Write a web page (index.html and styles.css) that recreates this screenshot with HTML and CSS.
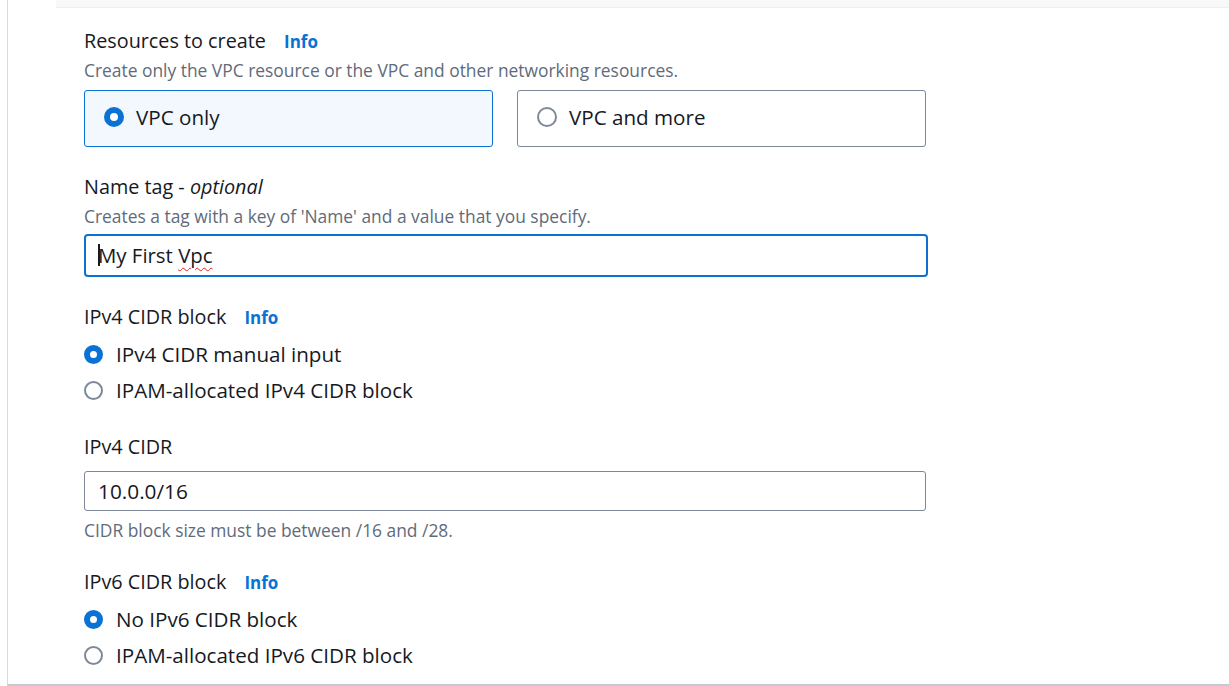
FILE: index.html
```html
<!DOCTYPE html>
<html lang="en">
<head>
<meta charset="utf-8">
<title>Create VPC</title>
<link rel="stylesheet" href="styles.css">
</head>
<body>
<div class="frame">
  <div class="topband"></div>
  <div class="form">
    <section class="field">
      <div class="label">Resources to create <a class="info">Info</a></div>
      <div class="desc">Create only the VPC resource or the VPC and other networking resources.</div>
      <div class="tiles">
        <div class="tile selected"><span class="radio on"></span><span>VPC only</span></div>
        <div class="tile"><span class="radio"></span><span>VPC and more</span></div>
      </div>
    </section>

    <section class="field gap-l">
      <div class="label">Name tag - <i>optional</i></div>
      <div class="desc">Creates a tag with a key of 'Name' and a value that you specify.</div>
      <div class="input focused"><span class="caret"></span>My First <span class="spell">Vpc</span></div>
    </section>

    <section class="field gap-l">
      <div class="label">IPv4 CIDR block <a class="info">Info</a></div>
      <div class="radios">
        <div class="opt"><span class="radio on"></span><span>IPv4 CIDR manual input</span></div>
        <div class="opt"><span class="radio"></span><span>IPAM-allocated IPv4 CIDR block</span></div>
      </div>
    </section>

    <section class="field gap-m">
      <div class="label">IPv4 CIDR</div>
      <div class="input plain">10.0.0/16</div>
      <div class="desc helper">CIDR block size must be between /16 and /28.</div>
    </section>

    <section class="field gap-x">
      <div class="label">IPv6 CIDR block <a class="info">Info</a></div>
      <div class="radios">
        <div class="opt"><span class="radio on"></span><span>No IPv6 CIDR block</span></div>
        <div class="opt"><span class="radio"></span><span>IPAM-allocated IPv6 CIDR block</span></div>
      </div>
    </section>
  </div>
</div>
</body>
</html>
```
FILE: styles.css
```css
* { box-sizing: border-box; }
html, body { margin: 0; padding: 0; background: #fff; }
body {
  font-family: "Open Sans", "Noto Sans", sans-serif;
  color: #16191f;
  width: 1229px;
  height: 686px;
  overflow: hidden;
}
.frame {
  margin-left: 7px;
  height: 686px;
  border-left: 1px solid #d5dbdb;
  border-bottom: 2px solid #c6cacf;
  display: flex;
  flex-direction: column;
}
.topband {
  margin-left: 48px;
  height: 8px;
  background: #f8f8f8;
  border-bottom: 1px solid #eeeeee;
}
.form {
  padding: 21px 0 0 76px;
  width: 920px;
}
.field { display: flex; flex-direction: column; }
.gap-l { margin-top: 28px; }
.gap-m { margin-top: 26px; }
.gap-x { margin-top: 30px; }
.label {
  font-size: 19.8px;
  line-height: 24px;
  height: 24px;
  white-space: nowrap;
}
.label i { font-style: italic; }
.info {
  color: #0972d3;
  font-weight: 700;
  font-size: 17px;
  margin-left: 13px;
}
.desc {
  margin-top: 7px;
  font-size: 17.4px;
  line-height: 20px;
  color: #5f6b7a;
  white-space: nowrap;
}
.helper { margin-top: 9px; }
.tiles {
  margin-top: 10px;
  display: flex;
  gap: 24px;
}
.tile {
  width: 409px;
  height: 57px;
  border: 1px solid #7d8998;
  border-radius: 3px;
  display: flex;
  align-items: center;
  gap: 12px;
  padding-left: 19px;
  padding-bottom: 3px;
  font-size: 20.6px;
}
.tile.selected {
  border-color: #0972d3;
  background: #f2f8fd;
}
.radio {
  width: 20px;
  height: 20px;
  border-radius: 50%;
  border: 2px solid #7d8998;
  background: #fff;
  flex: none;
}
.radio.on {
  border: 6px solid #0972d3;
}
.input {
  margin-top: 8px;
  height: 43px;
  width: 844px;
  border: 2px solid #0972d3;
  border-radius: 4px;
  display: flex;
  align-items: center;
  padding-left: 12px;
  padding-bottom: 2px;
  font-size: 20.4px;
  white-space: pre;
}
.caret {
  display: inline-block;
  width: 2px;
  height: 22px;
  background: #16191f;
  margin-right: -2px;
}
.spell {
  text-decoration: underline wavy #e0201b;
  text-decoration-thickness: 1px;
  text-underline-offset: 4px;
}
.input.plain {
  margin-top: 12px;
  height: 40px;
  width: 842px;
  border: 1px solid #7d8998;
  border-radius: 3px;
  padding-left: 13px;
  padding-bottom: 1px;
  font-size: 20.8px;
}
.radios { margin-top: 8px; display: flex; flex-direction: column; }
.opt {
  height: 36px;
  display: flex;
  align-items: center;
  gap: 13px;
  padding-bottom: 2px;
  font-size: 20.6px;
}
.opt .radio { width: 19px; height: 19px; }
```
